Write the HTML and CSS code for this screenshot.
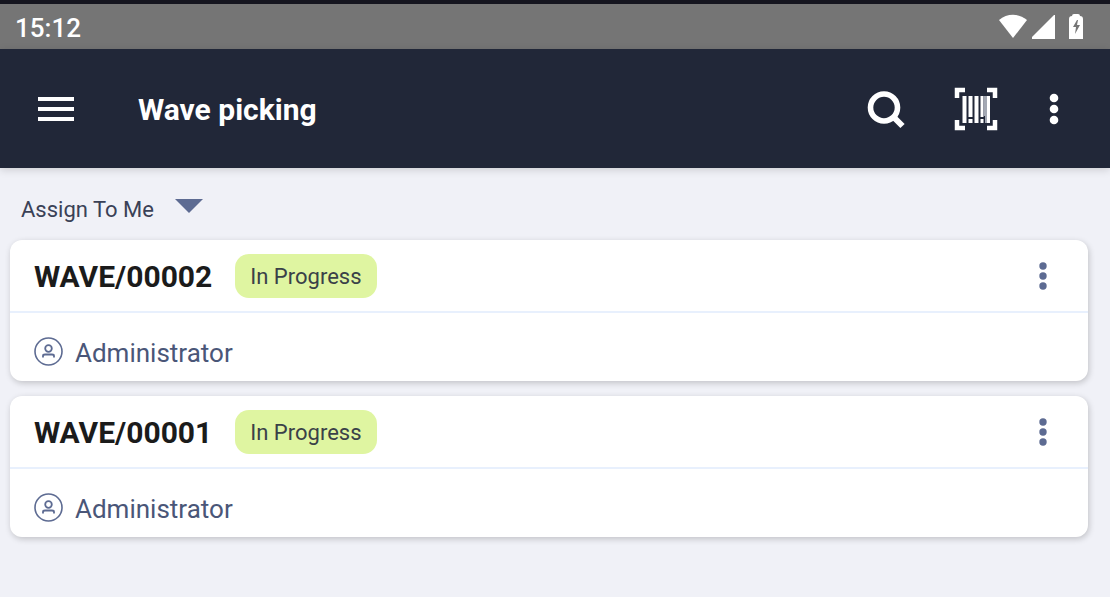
FILE: index.html
```html
<!DOCTYPE html>
<html lang="en">
<head>
    <meta charset="UTF-8">
    <meta name="viewport" content="width=device-width, initial-scale=1.0">
    <title>Wave picking</title>
    <link rel="stylesheet" href="styles.css">
</head>
<body>
    <div class="status-bar">
        <span class="clock">15:12</span>
        <div class="status-icons">
            <svg width="28" height="26" viewBox="0 0 28 26" fill="#fff"><path d="M0 6C8-1 20-1 28 6L14 24Z"/></svg>
            <svg width="24" height="26" viewBox="0 0 24 26" fill="#fff"><path d="M0 25V23L22 1H23V25Z"/></svg>
            <svg class="battery" width="14" height="26" viewBox="0 0 14 26"><path fill="#fff" d="M3 2Q3 0 5 0H9Q11 0 11 2Q14 2 14 5V25H0V5Q0 2 3 2Z"/><path fill="#757575" d="M8 6L4 13H7L6 20L11 11H8L9 6Z"/></svg>
        </div>
    </div>
    <header class="app-bar">
        <button type="button" class="icon-button" aria-label="Menu">
            <svg width="36" height="26" viewBox="0 0 36 26" fill="#fff"><path d="M0 1H36V5H0ZM0 11H36V15H0ZM0 21H36V25H0Z"/></svg>
        </button>
        <h1>Wave picking</h1>
        <div class="actions">
            <button type="button" class="icon-button" aria-label="Search">
                <svg width="40" height="40" viewBox="0 0 40 40" fill="none" stroke="#fff"><circle cx="18" cy="18.500" r="13.500" stroke-width="5.600"/><path d="M27 27.500L36.500 37" stroke-width="6"/></svg>
            </button>
            <button type="button" class="icon-button" aria-label="Scan barcode">
                <svg width="44" height="44" viewBox="0 0 44 44" fill="none" stroke="#fff">
                    <path stroke-width="4.500" d="M3 11V3H11M33 3H41V11M41 33V41H33M11 41H3V33"/>
                    <path stroke-width="4" d="M10.500 9V36M16.500 9V30M16.500 32V36M22.500 9V36"/>
                    <path stroke-width="3" d="M28 9V30M28 32V36M34.500 9V36"/>
                    <path stroke-width="2" stroke="#a3a8b3" d="M30.500 9V29M32 9V36"/>
                </svg>
            </button>
            <button type="button" class="icon-button" aria-label="More options">
                <svg width="16" height="32" viewBox="0 0 16 32" fill="#fff"><circle cx="8" cy="5" r="4.300"/><circle cx="8" cy="16" r="4.300"/><circle cx="8" cy="27" r="4.300"/></svg>
            </button>
        </div>
    </header>
    <main>
        <div class="filter">
            <select aria-label="Filter">
                <option>Assign To Me</option>
            </select>
            <svg class="arrow" width="28" height="14" viewBox="0 0 28 14" fill="#5d6b92"><path d="M0 0H28L14 14Z"/></svg>
        </div>
        <article class="card">
            <div class="card-head">
                <h2>WAVE/00002</h2>
                <span class="badge">In Progress</span>
                <button type="button" class="icon-button card-menu" aria-label="WAVE/00002 options">
                    <svg width="10" height="30" viewBox="0 0 10 30" fill="#5d6b92"><circle cx="5" cy="5" r="3.700"/><circle cx="5" cy="15" r="3.700"/><circle cx="5" cy="25" r="3.700"/></svg>
                </button>
            </div>
            <div class="card-user">
                <svg width="29" height="29" viewBox="0 0 29 29" fill="none" stroke="#5d6b92"><circle cx="14.500" cy="14.500" r="13.500" stroke-width="1.600"/><circle cx="14.500" cy="11.500" r="3.300" stroke-width="1.800"/><path d="M9 20.500V19Q9 17.500 11 17.500H18Q20 17.500 20 19V20.500" stroke-width="1.800"/></svg>
                <span>Administrator</span>
            </div>
        </article>
        <article class="card">
            <div class="card-head">
                <h2>WAVE/00001</h2>
                <span class="badge">In Progress</span>
                <button type="button" class="icon-button card-menu" aria-label="WAVE/00001 options">
                    <svg width="10" height="30" viewBox="0 0 10 30" fill="#5d6b92"><circle cx="5" cy="5" r="3.700"/><circle cx="5" cy="15" r="3.700"/><circle cx="5" cy="25" r="3.700"/></svg>
                </button>
            </div>
            <div class="card-user">
                <svg width="29" height="29" viewBox="0 0 29 29" fill="none" stroke="#5d6b92"><circle cx="14.500" cy="14.500" r="13.500" stroke-width="1.600"/><circle cx="14.500" cy="11.500" r="3.300" stroke-width="1.800"/><path d="M9 20.500V19Q9 17.500 11 17.500H18Q20 17.500 20 19V20.500" stroke-width="1.800"/></svg>
                <span>Administrator</span>
            </div>
        </article>
    </main>
</body>
</html>
```
FILE: styles.css
```css
* {
    box-sizing: border-box;
}
body {
    font-family: Roboto, sans-serif;
    margin: 0;
    background-color: #f0f1f7;
    color: #212738;
}
svg {
    display: block;
}
h1, h2 {
    margin: 0;
    padding-top: 2px;
    font-size: 30px;
    line-height: 36px;
}
.status-bar {
    display: flex;
    align-items: center;
    justify-content: space-between;
    height: 49px;
    padding: 0 27px 0 15px;
    border-top: 4px solid #15151f;
    background-color: #757575;
    color: #fff;
}
.clock {
    padding-top: 2px;
    font-size: 26px;
    font-weight: 500;
    line-height: 32px;
}
.status-icons {
    display: flex;
    align-items: center;
    gap: 5px;
}
.battery {
    margin-left: 8px;
}
.app-bar {
    display: flex;
    align-items: center;
    gap: 64px;
    height: 119px;
    padding: 0 48px 0 38px;
    background-color: #212738;
    color: #fff;
    box-shadow: 0 2px 8px rgba(0, 0, 0, 0.15);
}
.actions {
    display: flex;
    align-items: center;
    gap: 48px;
    margin-left: auto;
}
.icon-button {
    padding: 0;
    border: none;
    background: none;
    cursor: pointer;
}
main {
    padding: 24px 22px 24px 10px;
}
.filter {
    position: relative;
    width: max-content;
    margin: 0 0 16px 11px;
}
.filter select {
    display: block;
    appearance: none;
    height: 32px;
    padding: 2px 48px 0 0;
    border: none;
    background: none;
    font-family: inherit;
    font-size: 22px;
    color: #3a4156;
}
.arrow {
    position: absolute;
    top: 7px;
    right: 0;
    pointer-events: none;
}
.card {
    margin-bottom: 15px;
    border-radius: 12px;
    background-color: #fff;
    box-shadow: 1px 2px 6px rgba(0, 0, 0, 0.2);
}
.card-head {
    display: flex;
    align-items: center;
    height: 73px;
    padding: 0 40px 0 24px;
    border-bottom: 2px solid #e8f0fd;
}
.card-head h2 {
    color: #1b1b1b;
}
.badge {
    margin-left: 23px;
    padding: 2px 15px 0;
    border-radius: 14px;
    background-color: #dff5a1;
    color: #3a4148;
    font-size: 22px;
    line-height: 42px;
}
.card-menu {
    margin-left: auto;
}
.card-user {
    display: flex;
    align-items: center;
    gap: 12px;
    height: 68px;
    padding: 8px 24px 0;
    color: #4a5678;
    font-size: 26px;
    line-height: 32px;
}
.card-user span {
    padding-top: 4px;
}
```
